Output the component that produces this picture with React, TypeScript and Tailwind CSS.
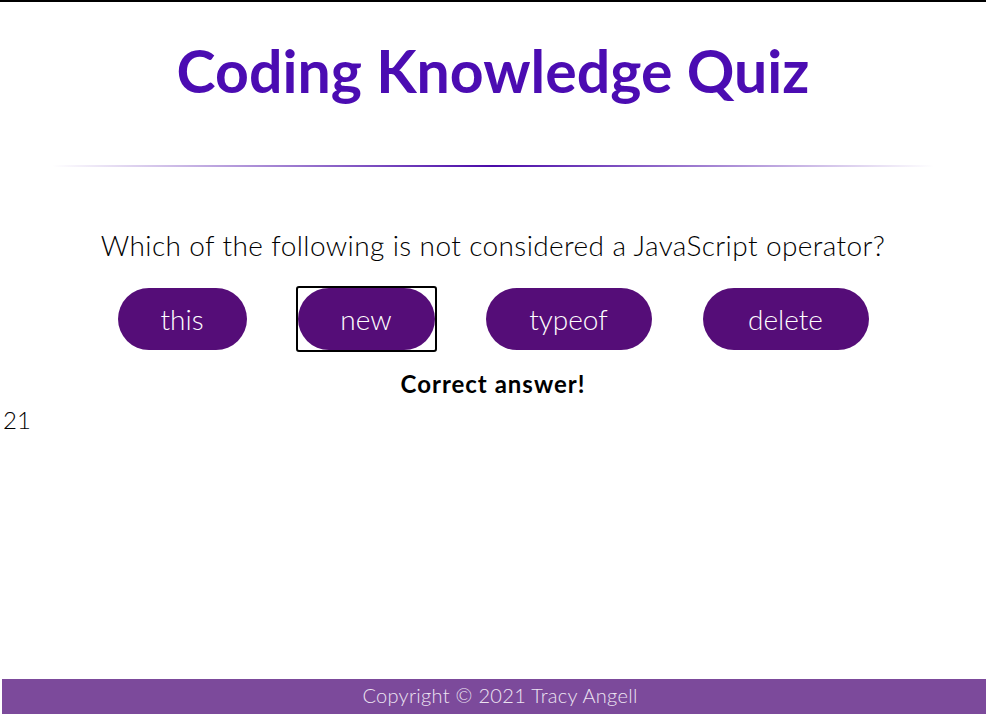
import React from 'react'

const answers = ['this', 'new', 'typeof', 'delete']
const widths: Record<string, string> = {
  this: 'w-[129px]',
  new: 'w-[137px]',
  typeof: 'w-[166px]',
  delete: 'w-[166px]',
}

export default function App() {
  const focused = 'new'

  return (
    <div className="h-[714px] flex flex-col bg-white text-black font-['Lato','Liberation_Sans',sans-serif] overflow-hidden">
      {/* top strip */}
      <div className="h-[2px] bg-black" />

      <header className="pt-[34px] text-center">
        <h1 className="text-[59px] leading-[1.2] font-bold text-[#4b0cb2]">Coding Knowledge Quiz</h1>
      </header>

      <div className="mt-[58px] mx-[52px] h-[2px] bg-gradient-to-r from-transparent via-[#4a0aa8] to-transparent" />

      <main className="flex flex-col items-center">
        <p className="mt-[62px] text-[28px] leading-[1.2] font-light tracking-[0.4px]">
          Which of the following is not considered a JavaScript operator?
        </p>

        <div className="mt-[26px] flex items-center gap-[51px]">
          {answers.map((a) =>
            a === focused ? (
              <span key={a} className="-m-[2px] border-2 border-black rounded-[3px] flex">
                <button className={`${widths[a]} h-[62px] rounded-full bg-[#550d78] text-white text-[28px] font-light`}>
                  {a}
                </button>
              </span>
            ) : (
              <button
                key={a}
                className={`${widths[a]} h-[62px] rounded-full bg-[#550d78] text-white text-[28px] font-light`}
              >
                {a}
              </button>
            )
          )}
        </div>

        <p className="mt-[20px] text-[24px] leading-[1.2] font-bold tracking-[1px]">Correct answer!</p>
      </main>

      <div className="pl-[3px] mt-[7px] text-[24px] leading-[1.2] font-light">21</div>

      <footer className="mt-auto ml-[2px] h-[35px] bg-[#7c4a9b] flex items-center justify-center">
        <span className="pl-[12px] pb-[3px] text-[20px] font-light tracking-[0.3px] text-[#ece4f2]">Copyright © 2021 Tracy Angell</span>
      </footer>
    </div>
  )
}
